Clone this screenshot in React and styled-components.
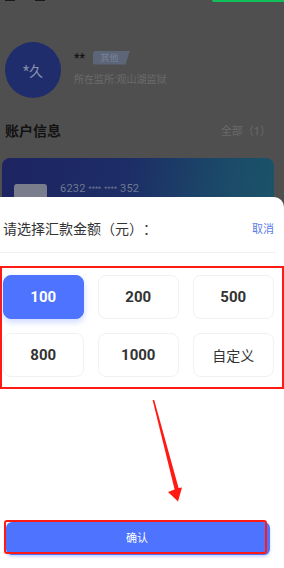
import React from "react";
import styled, { createGlobalStyle } from "styled-components";

const Global = createGlobalStyle`
  html, body { margin: 0; padding: 0; background: #4f4f4f; }
  body { font-family: Roboto, "Noto Sans CJK SC", sans-serif; text-spacing-trim: space-all; }
  * { box-sizing: border-box; }
`;

const Screen = styled.div`
  position: relative;
  width: 284px;
  height: 568px;
  overflow: hidden;
  background: #4f4f4f;
`;

const StatusBar = styled.div`
  height: 2px;
  display: flex;
  justify-content: space-between;
  align-items: flex-start;
`;

const StatusGlyphs = styled.div`
  display: flex;
  gap: 20px;
  margin-left: 5px;
  span { width: 10px; height: 1px; background: #1a1a1a; }
`;

const GreenBar = styled.div`
  width: 72px;
  height: 2px;
  background: #0fbf5a;
  border-bottom-left-radius: 2px;
`;

const Profile = styled.div`
  display: flex;
  align-items: center;
  gap: 13px;
  margin: 40px 0 0 5px;
`;

const Avatar = styled.div`
  width: 56px;
  height: 56px;
  border-radius: 50%;
  background: #1f2d6c;
  color: #8c93ad;
  display: flex;
  align-items: center;
  justify-content: center;
  font-size: 14px;
`;

const ProfileInfo = styled.div`
  display: flex;
  flex-direction: column;
  gap: 9px;
  padding-bottom: 4px;
`;

const NameRow = styled.div`
  display: flex;
  align-items: center;
  gap: 8px;
`;

const Name = styled.span`
  font-size: 12px;
  font-weight: 700;
  color: #121212;
  line-height: 14px;
`;

const Tag = styled.span`
  width: 37px;
  height: 14px;
  background: #5d6679;
  color: #76819a;
  font-size: 9px;
  line-height: 14px;
  text-align: center;
  clip-path: polygon(0 0, 100% 0, 88% 100%, 0 100%);
  border-radius: 3px 0 0 3px;
  padding-right: 4px;
`;

const Sub = styled.span`
  font-size: 10px;
  color: #6b6b6b;
  line-height: 12px;
`;

const SectionHead = styled.div`
  display: flex;
  justify-content: space-between;
  align-items: center;
  margin: 22px 13px 0 5px;
`;

const SectionTitle = styled.span`
  font-size: 14px;
  font-weight: 700;
  color: #121212;
`;

const SectionMore = styled.span`
  font-size: 11px;
  color: #6a6a6a;
`;

const Card = styled.div`
  margin: 18px 10px 0 2px;
  height: 60px;
  border-radius: 8px;
  background: linear-gradient(100deg, #1d2461 0%, #1d2d66 45%, #1b4a68 80%, #1b5468 100%);
  display: flex;
  align-items: flex-start;
  gap: 13px;
  padding: 24px 0 0 12px;
`;

const Chip = styled.div`
  width: 33px;
  height: 16px;
  margin-top: 2px;
  border-radius: 3px;
  background: #7a7e8c;
`;

const CardNum = styled.span`
  font-size: 11px;
  color: #6f7893;
  letter-spacing: 0.2px;
  small { font-size: 7px; vertical-align: 1px; }
`;

const Sheet = styled.div`
  position: absolute;
  left: 0;
  top: 197px;
  width: 284px;
  height: 371px;
  background: #ffffff;
  border-radius: 0 10px 0 0;
  display: flex;
  flex-direction: column;
`;

const SheetHead = styled.div`
  display: flex;
  justify-content: space-between;
  align-items: center;
  height: 56px;
  padding: 6px 2px 0 3px;
  margin-right: 8px;
  border-bottom: 1px solid #f2f2f4;
`;

const SheetTitle = styled.span`
  font-family: "Noto Sans CJK SC", sans-serif;
  font-size: 14px;
  color: #333;
`;

const Cancel = styled.span`
  font-family: "Noto Sans CJK SC", sans-serif;
  font-size: 11px;
  color: #5a7be6;
`;

const AmountBox = styled.div`
  margin-top: 13px;
  height: 123px;
  border: 2px solid #ff1a14;
  padding: 7px 8px 0 1px;
  display: grid;
  grid-template-columns: repeat(3, 80.5px);
  grid-auto-rows: 44px;
  column-gap: 14.5px;
  row-gap: 14px;
`;

const Amount = styled.div`
  border-radius: 8px;
  display: flex;
  align-items: center;
  justify-content: center;
  font-size: ${p => (p.$text ? "14px" : "15px")};
  font-weight: ${p => (p.$text ? 400 : 700)};
  color: ${p => (p.$active ? "#ffffff" : "#333333")};
  background: ${p => (p.$active ? "#4d73ff" : "#ffffff")};
  border: 1px solid ${p => (p.$active ? "#4d73ff" : "#f1f1f3")};
  box-shadow: ${p => (p.$active ? "0 3px 6px rgba(77,115,255,0.28)" : "none")};
`;

const Arrow = styled.svg`
  position: absolute;
  left: 0;
  top: 0;
  pointer-events: none;
`;

const ConfirmWrap = styled.div`
  position: relative;
  margin: 131px 0 0 4px;
  width: 266px;
  height: 35px;
`;

const ConfirmBtn = styled.div`
  position: absolute;
  left: 2px;
  top: 2px;
  width: 264px;
  height: 33px;
  border-radius: 6px;
  background: #4d73ff;
  box-shadow: 0 2px 3px rgba(77,115,255,0.3);
  display: flex;
  align-items: center;
  justify-content: center;
  color: #fff;
  font-size: 11px;
  padding: 0 2px 3px 0;
`;

const Marker = styled.div`
  position: absolute;
  left: 0;
  top: 0;
  width: 263px;
  height: 34px;
  border: 2.5px solid #ff1a14;
  border-radius: 3px;
  pointer-events: none;
`;

const amounts = [
  { v: "100", active: true },
  { v: "200" },
  { v: "500" },
  { v: "800" },
  { v: "1000" },
  { v: "自定义", text: true },
];

export default function App() {
  return (
    <>
      <Global />
      <Screen>
        <StatusBar>
          <StatusGlyphs><span /><span /></StatusGlyphs>
          <GreenBar />
        </StatusBar>
        <Profile>
          <Avatar>*久</Avatar>
          <ProfileInfo>
            <NameRow>
              <Name>**</Name>
              <Tag>其他</Tag>
            </NameRow>
            <Sub>所在监所:观山湖监狱</Sub>
          </ProfileInfo>
        </Profile>
        <SectionHead>
          <SectionTitle>账户信息</SectionTitle>
          <SectionMore>全部（1）</SectionMore>
        </SectionHead>
        <Card>
          <Chip />
          <CardNum>6232 <small>****</small> <small>****</small> 352</CardNum>
        </Card>
        <Sheet>
          <SheetHead>
            <SheetTitle>请选择汇款金额（元）：</SheetTitle>
            <Cancel>取消</Cancel>
          </SheetHead>
          <AmountBox>
            {amounts.map(a => (
              <Amount key={a.v} $active={a.active} $text={a.text}>{a.v}</Amount>
            ))}
          </AmountBox>
          <ConfirmWrap>
            <ConfirmBtn>确认</ConfirmBtn>
            <Marker />
          </ConfirmWrap>
          <Arrow width="284" height="371" viewBox="0 197 284 371">
            <polygon points="152.6,400 154.2,400 178.6,488 182,487.5 178,501.5 168,492 174.6,489.5" fill="#ff1a14" />
          </Arrow>
        </Sheet>
      </Screen>
    </>
  );
}
